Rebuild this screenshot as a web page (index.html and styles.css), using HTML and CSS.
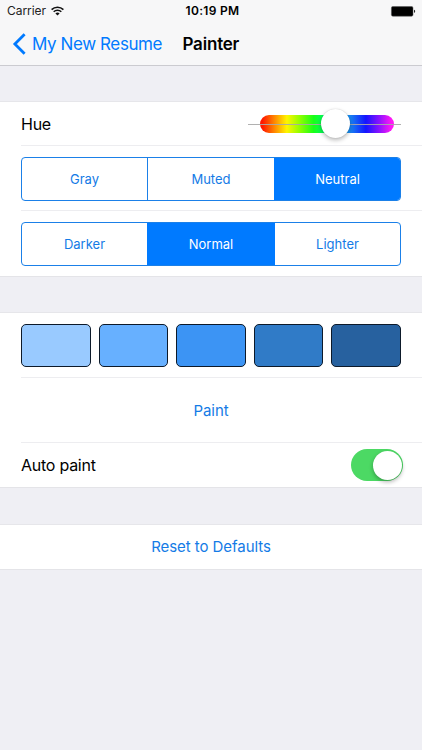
FILE: index.html
```html
<!DOCTYPE html>
<html lang="en">
<head>
<meta charset="utf-8">
<title>Painter</title>
<link rel="stylesheet" href="styles.css">
</head>
<body>
<header class="top">
  <div class="status">
    <div class="carrier"><span class="carrier-name">Carrier</span>
      <svg class="wifi" width="13" height="10" viewBox="0 0 13 10" fill="none" stroke="#111" stroke-width="1.6"><path d="M.6 3.6a8.4 8.4 0 0 1 11.8 0M2.7 5.8a5.4 5.4 0 0 1 7.6 0"/><path d="M6.5 9.6 4.4 7.5a3 3 0 0 1 4.2 0z" fill="#111" stroke="none"/></svg>
    </div>
    <span class="time">10:19 PM</span>
    <svg class="battery" width="26" height="11" viewBox="0 0 26 11"><rect x="1.4" y=".6" width="21.6" height="9.6" rx="1.4" fill="#000" stroke="#555" stroke-width=".5"/><path d="M24 3.8c1.6.4 1.6 2.8 0 3.2z" fill="#222"/></svg>
  </div>
  <nav class="nav">
    <a class="back"><svg width="14" height="22" viewBox="0 0 14 22" fill="none" stroke="#007aff" stroke-width="2.8"><path d="M12.6 1.3 2.9 11 12.6 20.7"/></svg><span class="back-label">My New Resume</span></a>
    <h1 class="title">Painter</h1>
  </nav>
</header>
<main>
  <section class="group">
    <div class="row hue-row"><span class="label hue">Hue</span>
      <div class="slider"><div class="spectrum"></div><div class="line"></div><div class="thumb"></div></div>
    </div>
    <div class="row seg-row"><div class="seg"><span>Gray</span><span>Muted</span><span class="on">Neutral</span></div></div>
    <div class="row seg-row"><div class="seg"><span>Darker</span><span class="on">Normal</span><span>Lighter</span></div></div>
  </section>
  <section class="group">
    <div class="row swatches"><i class="c1"></i><i class="c2"></i><i class="c3"></i><i class="c4"></i><i class="c5"></i></div>
    <div class="row paint"><span class="action">Paint</span></div>
    <div class="row auto"><span class="label">Auto paint</span><div class="switch"><div class="knob"></div></div></div>
  </section>
  <section class="group last">
    <div class="row reset"><span class="action">Reset to Defaults</span></div>
  </section>
</main>
</body>
</html>
```

FILE: styles.css
```css
* { box-sizing: border-box; }
body {
  margin: 0;
  width: 422px;
  height: 750px;
  overflow: hidden;
  background: #efeff4;
  color: #000;
  font-family: Inter, "Liberation Sans", sans-serif;
}
.top { height: 66px; background: #f7f7f8; border-bottom: 1px solid #cbcbd0; }
.status {
  height: 22px;
  padding: 0 6px 0 7px;
  display: grid;
  grid-template-columns: 1fr auto 1fr;
  align-items: center;
  font-size: 12px;
  line-height: 22px;
}
.carrier { display: flex; align-items: center; gap: 5px; color: #222; }
.carrier-name { letter-spacing: -0.05px; }
.wifi { margin-bottom: 1px; }
.time { font-weight: 600; letter-spacing: 0.3px; margin-left: 2px; }
.battery { justify-self: end; }
.nav { height: 43px; display: flex; align-items: center; padding-left: 12px; }
.back { display: flex; align-items: center; gap: 6px; width: 170.5px; color: #007aff; font-size: 17px; white-space: nowrap; }
.back-label { letter-spacing: -0.4px; }
.title { margin: 0; font-size: 17px; font-weight: 600; letter-spacing: -0.2px; }
.group { margin-top: 35px; background: #fff; border-top: 1px solid #e6e6ea; border-bottom: 1px solid #e4e4e8; }
.last { margin-top: 36px; }
.row { display: flex; align-items: center; margin-left: 21px; padding-right: 21px; }
.row + .row { border-top: 1px solid #ededf0; }
.hue-row { height: 43px; justify-content: space-between; padding-top: 1px; }
.label { font-size: 16px; letter-spacing: -0.25px; }
.slider { position: relative; width: 153px; height: 34px; display: flex; align-items: center; padding-left: 12px; }
.spectrum {
  width: 134px;
  height: 18px;
  border-radius: 9px;
  background: linear-gradient(90deg, #ff1800 2%, #ff8a00 11%, #fff500 20%, #8cff00 30%, #18ff18 40%, #00ff60 48%, #00e5ff 58%, #1890f0 66%, #1414ff 79%, #8b12ff 89%, #ff18f5 98%);
}
.line { position: absolute; left: 0; right: 0; top: 17px; height: 1px; background: rgba(168, 168, 168, .9); }
.thumb { position: absolute; left: 73px; top: 2px; width: 29px; height: 29px; border-radius: 50%; background: #fff; box-shadow: 0 2px 4px rgba(0, 0, 0, .28), 0 0 1px rgba(0, 0, 0, .2); }
.seg-row { height: 65px; padding-top: 2px; }
.seg-row:last-child { height: 66px; padding-top: 1px; }
.seg { width: 380px; height: 44px; display: grid; grid-template-columns: 125px 127px 1fr; border: 1px solid #1b80e8; border-radius: 4px; overflow: hidden; color: #147be6; font-size: 13px; }
.seg span { display: flex; align-items: center; justify-content: center; }
.seg span + span { border-left: 1px solid #1b80e8; }
.seg .on { background: #007aff; color: #fff; }
.seg .on, .seg .on + span { border-left-color: #007aff; }
.swatches { height: 64px; gap: 8px; }
.swatches i { flex: 1; height: 43px; border: 1.4px solid #0d1a2a; border-radius: 5px; }
.c1 { background: #99caff; }
.c2 { background: #67b0ff; }
.c3 { background: #3c94f4; }
.c4 { background: #307bc7; }
.c5 { background: #27619f; }
.paint { height: 65px; justify-content: center; }
.action { color: #147be6; font-size: 15px; letter-spacing: -0.06px; }
.auto { height: 45px; justify-content: space-between; padding-right: 19px; }
.switch { width: 52px; height: 32px; padding: 2px 1px 2px 2px; display: flex; justify-content: flex-end; border-radius: 16px; background: #4cd964; }
.knob { width: 29px; height: 29px; border-radius: 50%; background: #fff; box-shadow: 0 2px 4px rgba(0, 0, 0, .3); }
.reset { height: 44px; justify-content: center; padding-bottom: 1px; }
```
